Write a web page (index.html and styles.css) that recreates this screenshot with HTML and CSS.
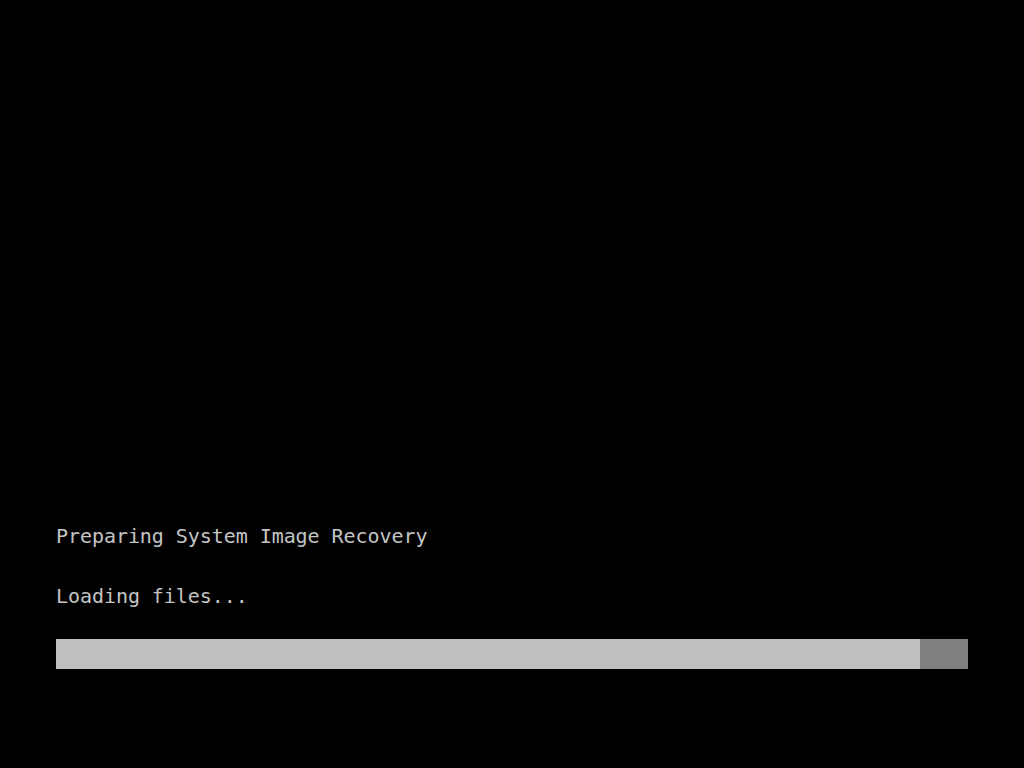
FILE: index.html
```html
<!DOCTYPE html>
<html lang="en">
<head>
<meta charset="utf-8">
<title>Preparing System Image Recovery</title>
<link rel="stylesheet" href="styles.css">
</head>
<body>
<main class="screen">
  <div class="status">
    <p class="line">Preparing System Image Recovery</p>
    <p class="line line-sub">Loading files...</p>
    <div class="progress">
      <div class="progress-fill" style="width: 864px"></div>
    </div>
  </div>
</main>
</body>
</html>
```
FILE: styles.css
```css
html, body {
  margin: 0;
  padding: 0;
  background: #000;
}
.screen {
  width: 1024px;
  height: 768px;
  display: flex;
  flex-direction: column;
  justify-content: flex-end;
  box-sizing: border-box;
  padding: 0 56px 99px 56px;
}
.status {
  display: flex;
  flex-direction: column;
}
.line {
  margin: 0;
  font-family: "DejaVu Sans Mono", "Liberation Mono", monospace;
  font-size: 20px;
  line-height: 24px;
  letter-spacing: -0.06px;
  color: #c4c4c4;
  white-space: pre;
}
.line-sub {
  margin-top: 36px;
}
.progress {
  margin-top: 31px;
  height: 30px;
  width: 912px;
  background: #808080;
  display: flex;
}
.progress-fill {
  height: 100%;
  background: #c0c0c0;
}
```
